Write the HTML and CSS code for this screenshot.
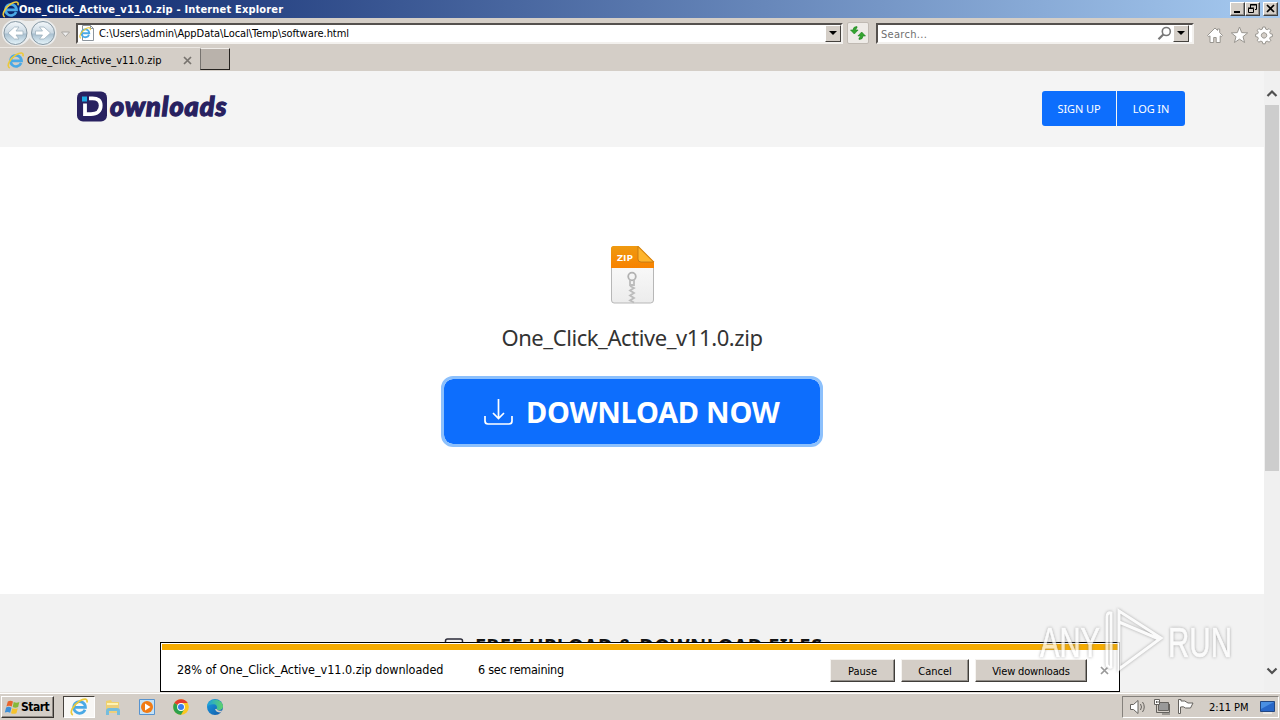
FILE: index.html
```html
<!DOCTYPE html>
<html lang="en">
<head>
<meta charset="utf-8">
<title>One_Click_Active_v11.0.zip</title>
<link rel="stylesheet" href="styles.css">
</head>
<body>
<svg width="0" height="0" class="defs">
  <defs>
    <linearGradient id="ball" x1="0" y1="0" x2="0" y2="1"><stop offset="0" stop-color="#f4f8fb"/><stop offset=".48" stop-color="#cbd9e3"/><stop offset=".55" stop-color="#a9c0d0"/><stop offset="1" stop-color="#e6f5fb"/></linearGradient>
    <linearGradient id="zipTop" x1="0" y1="0" x2="0" y2="1"><stop offset="0" stop-color="#ef9a10"/><stop offset="1" stop-color="#f88200"/></linearGradient>
    <linearGradient id="zipBody" x1="0" y1="0" x2="0" y2="1"><stop offset="0" stop-color="#fff"/><stop offset="1" stop-color="#ececec"/></linearGradient>
    <linearGradient id="edgeBlue" x1="0" y1="0" x2="1" y2="1"><stop offset="0" stop-color="#1b9de2"/><stop offset="1" stop-color="#1259a8"/></linearGradient>
    <linearGradient id="edgeTop" x1="0" y1="0" x2="1" y2="0"><stop offset="0" stop-color="#1b9fe0"/><stop offset="1" stop-color="#5fd36a"/></linearGradient>
    <symbol id="ie" viewBox="0 0 16 16">
      <path d="M13.300 10.400A5.200 5.200 0 1 1 13.700 8.300H4.600" fill="none" stroke="#4aa9e6" stroke-width="2.500"/>
      <path d="M2.600 15C-1 13.500 2.500 6.500 8.500 2.600 12.500.2 16 .2 15 4" fill="none" stroke="#ecc93a" stroke-width="1.500"/>
    </symbol>
    <symbol id="flag" viewBox="0 0 18 16">
      <path d="M4 1.500q3-1.500 5.500.2L8.200 7Q5.500 5.500 2.500 6.800z" fill="#e8642c"/>
      <path d="M10.300 2.200q3 1.500 6 0L15 7.500q-3 1.300-5.800 0z" fill="#86b83a"/>
      <path d="M2.200 7.900q3-1.300 5.700.3L6.500 13.500Q3.800 12 .8 13.300z" fill="#3d8fd8"/>
      <path d="M8.800 8.700q3 1.400 5.800 0L13.200 14q-3 1.500-5.800 0z" fill="#f5c22c"/>
    </symbol>
  </defs>
</svg>
<div class="screen">
  <header class="titlebar">
    <svg class="t-ico" width="17" height="17"><use href="#ie"/></svg>
    <span class="t-text">One_Click_Active_v11.0.zip - Internet Explorer</span>
    <div class="winbtns">
      <i class="wb"><svg width="14" height="12"><path d="M3 9h6" stroke="#000" stroke-width="2"/></svg></i>
      <i class="wb"><svg width="14" height="12"><path d="M4.500 5V1.500h6v5H9M4 2h7M2.500 5.500h5v4h-5zM2 5h6" fill="none" stroke="#000"/></svg></i>
      <i class="wb gap"><svg width="14" height="12"><path d="M3 2l7 7M10 2l-7 7" stroke="#000" stroke-width="1.700"/></svg></i>
    </div>
  </header>

  <nav class="navbar">
    <svg class="arrows" width="75" height="29" viewBox="0 0 75 29">
      <path d="M2 15C2 6 9 1.500 15.500 1.500q6 0 10 1.500h8c4-2 9-3 13-1 6 2 10 6 10 13 0 7-5 13-13 13-6 0-10-3-14-8-3 5-8 8-14 8C8 28 2 22 2 15z" fill="#ebecec"/>
      <circle cx="15.500" cy="15" r="11.500" fill="url(#ball)" stroke="#8698a4"/>
      <circle cx="43" cy="15" r="11.500" fill="url(#ball)" stroke="#8698a4"/>
      <path d="M23 13h-7l3-4h-4.500L8 15l6.500 6H19l-3-4h7zM35.500 13h7l-3-4H44l6.500 6-6.500 6h-4.500l3-4h-7z" fill="#fff" stroke="#9fb2bf" stroke-width=".8"/>
      <path d="M61.500 14h8l-4 4.500z" fill="#eee" stroke="#a9a6a1"/>
    </svg>
    <div class="address">
      <svg width="16" height="16" viewBox="0 0 16 16" class="page-ico"><path d="M3.500.5h8l3 3v12h-11z" fill="#fff" stroke="#8c949c"/><path d="M11.500.5v3h3" fill="none" stroke="#8c949c"/><svg x="0" y="2" width="12" height="12"><use href="#ie"/></svg></svg>
      <span class="url">C:\Users\admin\AppData\Local\Temp\software.html</span>
      <i class="drop"></i>
    </div>
    <div class="refresh"><svg width="20" height="20" viewBox="0 0 20 20"><path d="M9 3.500q-4 0-4 3.500H2.500L6.300 11l3.800-4H7.700Q7.500 5.300 9 5zM11 16.500q4 0 4-3.500h2.500l-3.800-4-3.800 4h2.400q.2 1.700-1.300 2z" fill="#34a52f" stroke="#1e8424" stroke-width=".6"/></svg></div>
    <div class="search"><span class="hint">Search...</span>
      <svg width="15" height="15" viewBox="0 0 15 15"><circle cx="9.300" cy="5.500" r="4" fill="none" stroke="#777" stroke-width="1.600"/><path d="M6.300 8.500L1.500 13.300" stroke="#777" stroke-width="2.200"/></svg>
      <i class="drop"></i>
    </div>
    <svg class="tools" width="70" height="22" viewBox="0 0 70 22">
      <g fill="#fff" stroke="#98958f" stroke-width="1" stroke-linejoin="round">
        <path d="M1.500 11.500L9 4l2.500 2.400V5h2.200v3.600l2.800 2.900-1.300 1.200-1-.9v6.700h-4v-5H7.700v5H4v-6.700l-1.100.9z"/>
        <path d="M33.500 3l2.200 5.600 6 .3-4.700 3.800 1.600 5.800-5.100-3.300-5.100 3.300 1.600-5.800-4.700-3.800 6-.3z"/>
        <path fill-rule="evenodd" d="M56.800 3h2.400l.5 2.100 1.500.6 1.900-1.100 1.700 1.700-1.100 1.900.6 1.500 2.100.5v2.400l-2.100.5-.6 1.500 1.100 1.900-1.700 1.700-1.900-1.100-1.500.6-.5 2.100h-2.400l-.5-2.100-1.500-.6-1.900 1.100-1.700-1.700 1.100-1.900-.6-1.500-2.100-.5v-2.400l2.100-.5.6-1.500-1.100-1.900 1.700-1.700 1.900 1.100 1.500-.6zM58 8.700a2.700 2.700 0 1 0 .1 0z"/>
      </g>
    </svg>
  </nav>

  <div class="tabs">
    <div class="tab"><svg width="17" height="17"><use href="#ie"/></svg><span class="tab-text">One_Click_Active_v11.0.zip</span><svg class="tab-x" width="9" height="9"><path d="M1 1l7 7M8 1L1 8" stroke="#77736e" stroke-width="1.700"/></svg></div>
    <div class="newtab"></div>
  </div>

  <div class="view">
    <main class="page">
      <div class="site-head">
        <div class="logo">
          <svg width="31" height="31" viewBox="0 0 31 31"><rect width="30" height="30" y=".5" rx="6" fill="#282160"/><path d="M8 12.500v10.700h6c6 0 9.700-3.200 9.700-8.700 0-5-3-7.200-8.200-7.200H12" fill="none" stroke="#fff" stroke-width="3.800"/><path d="M5 5.500h5v5H5z" fill="#1eaae2"/></svg>
          <span class="logo-text">ownloads</span>
        </div>
        <div class="auth"><a>SIGN UP</a><a>LOG IN</a></div>
      </div>
      <section class="hero">
        <svg class="zip" width="45" height="60" viewBox="0 0 45 60">
          <path d="M3 1.500h25L43.500 17v38q0 3-3 3H4q-2.500 0-2.500-3V4q0-2.500 2.500-2.500z" fill="url(#zipBody)" stroke="#b7b7b7"/>
          <path d="M3.500 1h25L44 16.500V23H1V3.500Q1 1 3.500 1z" fill="url(#zipTop)"/>
          <path d="M28 1.500V14q0 3 3 3h12.500z" fill="#ffb52c" stroke="#bc7414" stroke-width=".8"/>
          <text x="7" y="16" class="zip-label" textLength="16" lengthAdjust="spacingAndGlyphs">ZIP</text>
          <circle cx="22" cy="31.500" r="3.800" fill="none" stroke="#b2b2b2" stroke-width="1.800"/>
          <path d="M20 34.500v5.500h4v-5.500M20 41l4 2-4 2.500 4 2.500-4 2.500 4 2.500-4 2.500 4 2" fill="none" stroke="#bcbcbc" stroke-width="1.800"/>
        </svg>
        <h1 class="filename">One_Click_Active_v11.0.zip</h1>
        <a class="download">
          <svg width="30" height="26" viewBox="0 0 30 26"><path d="M1 17v5q0 3 3 3h21q3 0 3-3v-5M14.500 0v19M9 14l5.500 5.500L20 14" fill="none" stroke="#fff" stroke-width="1.700"/></svg>
          <span class="dl-text">DOWNLOAD NOW</span>
        </a>
      </section>
      <section class="feature">
        <svg width="20" height="20" viewBox="0 0 20 20"><rect x="1.500" y="1" width="17" height="17" rx="2" fill="none" stroke="#2a2a38" stroke-width="1.500"/></svg>
        <h2 class="feature-text">FREE UPLOAD &amp; DOWNLOAD FILES</h2>
      </section>
    </main>
    <div class="scroll">
      <svg width="16" height="34" viewBox="0 0 16 34"><path d="M3.500 25L8 20.500l4.500 4.500" fill="none" stroke="#505050" stroke-width="2.200"/></svg>
      <div class="thumb"></div>
      <svg class="down" width="16" height="34" viewBox="0 0 16 34"><path d="M3.500 10.500L8 15l4.500-4.500" fill="none" stroke="#505050" stroke-width="2.200"/></svg>
    </div>
    <div class="notice">
      <div class="bar"></div>
      <div class="row">
        <span class="msg">28% of One_Click_Active_v11.0.zip downloaded</span>
        <span class="remain">6 sec remaining</span>
        <button class="btn b1"><span>Pause</span></button><button class="btn b2"><span>Cancel</span></button><button class="btn b3"><span>View downloads</span></button>
        <svg width="9" height="9" class="nx"><path d="M1 1l7 7M8 1L1 8" stroke="#999" stroke-width="1.700"/></svg>
      </div>
    </div>
  </div>

  <footer class="taskbar">
    <div class="start"><svg width="17" height="15"><use href="#flag"/></svg><span class="start-text">Start</span></div>
    <div class="task active"><svg width="18" height="18"><use href="#ie"/></svg></div>
    <div class="task"><svg width="18" height="18" viewBox="0 0 18 18"><path d="M2 3l5-1 1 2h7v11H2z" fill="#efd16c"/><path d="M3 5h11v4H3z" fill="#fff3b3"/><path d="M3 7h12v8H3z" fill="#edcf7b"/><path d="M2 17v-4q0-3 3-3h8q3 0 3 3v4h-3v-4H5v4z" fill="#75bddd"/></svg></div>
    <div class="task"><svg width="18" height="18" viewBox="0 0 18 18"><path d="M1.500 1.500h15v15h-15z" fill="#c4e2f7" stroke="#5793cf"/><circle cx="9" cy="9" r="6" fill="#f17b14"/><path d="M7 5.500l5.500 3.500L7 12.500z" fill="#fff"/></svg></div>
    <div class="task"><svg width="18" height="18" viewBox="0 0 18 18"><circle cx="9" cy="9" r="7.800" fill="#fbc720"/><path d="M9 9L2.250 5.100A7.800 7.800 0 0 1 15.750 5.100H9z" fill="#e33b2e"/><path d="M9 9L2.250 5.100A7.800 7.800 0 0 0 9 16.800L12.400 11z" fill="#2da14c"/><circle cx="9" cy="9" r="3.900" fill="#fff"/><circle cx="9" cy="9" r="3" fill="#3b7ded"/></svg></div>
    <div class="task"><svg width="18" height="18" viewBox="0 0 18 18"><circle cx="9" cy="9" r="8" fill="url(#edgeBlue)"/><path d="M1.200 8.500C1.700-1.300 17 0 17 8.500c0 4-6 4.400-6.500 2.500 1.300-2 0-4.500-2.500-4.700-3-.2-6 1-6.800 2.200z" fill="url(#edgeTop)"/><path d="M10.500 11q1 2.500 6 1.500-1 1.500-2 2-4.500 0-5.500-3.500z" fill="#d5cec6"/></svg></div>
    <div class="tray">
      <svg width="72" height="18" viewBox="0 0 72 18"><g fill="#fff" stroke="#65625e">
        <path d="M1.500 6.500h3L9 2.500v13l-4.500-4h-3z"/><path d="M11.500 6q2 3 0 6M13.500 4q3.500 5 0 10" fill="none"/>
        <path d="M29.500 4.500h10v8h-10z" fill="#999"/><path d="M25.500 1.500h5v5h-5z"/><path d="M27.500 6.500v8h13V6" fill="none"/><path d="M27.500 3v2M29 3v2M33 16h8"/>
        <path d="M49.500 1.500v14h2V9q3-1 5 1h5l2.500-5h-5q-3-3-7-2V1.500z"/></g></svg>
      <span class="clock">2:11 PM</span>
      <svg width="17" height="15" viewBox="0 0 17 15"><path d="M1.500 1.500h14v10h-14z" fill="#2867c8" stroke="#234781"/><path d="M2 2h13L2 9z" fill="#4a8fe2"/><path d="M4 13h9" stroke="#fff"/></svg>
    </div>
  </footer>
  <svg class="watermark" width="220" height="70" viewBox="0 0 220 70">
    <g class="wm-shape"><path d="M76 6q-4-1-4 4v46q0 5 4 4zM84 4l42 27-42 31zM84 15l40 17"/></g>
    <text class="wm-text" x="5" y="50" textLength="60" lengthAdjust="spacingAndGlyphs">ANY</text>
    <text class="wm-text" x="133" y="50" textLength="64" lengthAdjust="spacingAndGlyphs">RUN</text>
  </svg>
</div>
</body>
</html>
```

FILE: styles.css
```css
* { box-sizing: border-box; }
body { margin: 0; font-family: "DejaVu Sans Condensed", "DejaVu Sans", sans-serif; font-stretch: condensed; font-size: 11px; color: #000; }
.defs { position: absolute; }
.screen { position: relative; width: 1280px; height: 720px; overflow: hidden; display: flex; flex-direction: column; background: #d4cec7; }
svg { flex: none; display: block; }
span, h1, h2, a { white-space: nowrap; }

.titlebar { height: 18px; display: flex; align-items: center; background: linear-gradient(90deg, #0a246a, #a6caf0); padding: 0 2px; flex: none; }
.t-text { color: #fff; font-weight: bold; letter-spacing: .18px; }
.winbtns { margin-left: auto; display: flex; }
.wb { width: 15px; height: 14px; background: #d4cec7; border: 1px solid; border-color: #fff #404040 #404040 #fff; box-shadow: inset -1px -1px #918e8a; }
.gap { margin-left: 3px; }

.navbar { height: 29px; display: flex; align-items: center; flex: none; }
.address { width: 767px; height: 21px; margin: 1px 0 0 1px; background: #fff; border: 2px solid; border-color: #55514e #f3f1ee #f3f1ee #55514e; display: flex; align-items: center; }
.page-ico { margin-left: 1px; }
.url { margin: 1px 0 0 4px; letter-spacing: -.04px; }
.drop { margin-left: auto; width: 16px; height: 17px; background: #d4cec7; border: 1px solid; border-color: #fff #45423e #45423e #fff; display: flex; align-items: center; justify-content: center; }
.drop::after { content: ""; border: 4px solid transparent; border-top-color: #000; border-bottom: 0; }
.refresh { width: 22px; height: 22px; margin: 1px 0 0 4px; background: #eeebe7; border: 1px solid #c0bab3; border-radius: 2px; }
.search { width: 318px; height: 21px; margin: 1px 0 0 7px; background: #fff; border: 2px solid; border-color: #55514e #f3f1ee #f3f1ee #55514e; display: flex; align-items: center; padding-right: 3px; }
.hint { color: #6f6f6f; margin: 2px 0 0 3px; flex: 1; letter-spacing: .3px; }
.search .drop { margin-left: 1px; }
.tools { margin: 4px 0 0 12px; }

.tabs { height: 24px; display: flex; flex: none; }
.tab { width: 200px; height: 23px; display: flex; align-items: center; padding: 2px 8px 0 7px; border-top: 1px solid #ece8e3; }
.tab-text { margin-left: 3px; }
.tab-x { margin-left: auto; }
.newtab { width: 30px; height: 22px; margin-top: 1px; background: #b9b2ab; border: 1px solid; border-color: #f0ede9 #25221f #25221f #77736f; }

.view { position: relative; height: 621px; display: flex; flex: none; background: #f2f2f2; }
.page { width: 1264px; height: 621px; overflow: hidden; background: #fff; }
.site-head { height: 76px; background: #f4f4f4; display: flex; justify-content: space-between; align-items: flex-start; padding: 20px 79px 0 77px; }
.logo { display: flex; align-items: center; height: 31px; }
.logo-text { font: italic 900 27px/30px Lato, sans-serif; color: #282160; margin: -2px 0 0 2px; letter-spacing: 1px; -webkit-text-stroke: 1.300px #282160; }
.auth { display: flex; gap: 1px; }
.auth a { height: 35px; background: #0d6efd; color: #fff; font: 11px/36px "Noto Sans", sans-serif; width: 74px; text-align: center; border-radius: 3px 0 0 3px; letter-spacing: -.1px; }
.auth a + a { width: 68px; border-radius: 0 3px 3px 0; }
.hero { height: 447px; display: flex; flex-direction: column; align-items: center; padding-top: 98px; }
.zip-label { font: bold 9.500px "Open Sans", sans-serif; fill: #fff; }
.filename { margin: 15px 0 0; font: 22px/34px "Noto Sans", sans-serif; letter-spacing: -.42px; color: #333; }
.download { width: 382px; height: 71px; margin-top: 22px; border: 3px solid #8cc0fc; border-radius: 12px; background: #0d6efd; background-clip: padding-box; display: flex; align-items: center; padding-left: 40px; color: #fff; }
.dl-text { font: bold 29px/40px "Noto Sans", sans-serif; margin-left: 12px; letter-spacing: -.25px; }
.feature { height: 98px; background: #f2f2f2; display: flex; padding: 44px 0 0 444px; }
.feature-text { margin: -8px 0 0 11px; font: bold 20px/32px "Noto Sans", sans-serif; letter-spacing: .36px; color: #111; }

.scroll { width: 16px; background: #f0f0f0; display: flex; flex-direction: column; }
.thumb { height: 366px; background: #cdcdcd; margin: 0 1px; flex: none; }
.down { margin-top: auto; }

.notice { position: absolute; left: 160px; top: 571px; width: 960px; height: 50px; background: #fff; border: 1px solid #000; padding: 1px; }
.bar { height: 6px; background: #f5ab00; }
.row { display: flex; align-items: center; height: 41px; padding-left: 15px; }
.msg { font-size: 12.500px; width: 301px; margin-top: -2px; letter-spacing: -.03px; }
.remain { font-size: 12.500px; width: 352px; margin-top: -2px; letter-spacing: -.28px; }
.btn { height: 23px; padding: 1px 0 0; margin: 0 6px 0 0; background: #d4cec7; border: 1px solid; border-color: #f5f3f0 #403d39 #403d39 #f5f3f0; box-shadow: inset -1px -1px #918d88; font: inherit; flex: none; }
.b1 { width: 65px; }
.b2 { width: 68px; }
.b3 { width: 112px; letter-spacing: -.15px; }
.nx { margin-left: 7px; }

.taskbar { height: 28px; display: flex; align-items: center; border-top: 1px solid #e5e1dc; box-shadow: inset 0 1px #fff; padding: 1px 0 0 1px; flex: none; }
.start { width: 53px; height: 22px; border: 1px solid; border-color: #fff #37332f #37332f #fff; box-shadow: inset -1px -1px #8e8984; display: flex; align-items: center; padding-left: 2px; margin-right: 9px; }
.start-text { font-weight: bold; font-size: 12px; letter-spacing: -.5px; }
.task { width: 32px; height: 22px; margin-right: 2px; display: flex; align-items: center; justify-content: center; }
.active { background: #f8f7f5; border: 1px solid; border-color: #45413c #fff #fff #45413c; }
.tray { margin-left: auto; width: 157px; height: 22px; margin-right: 1px; border: 1px solid; border-color: #85817c #fff #fff #85817c; display: flex; align-items: center; padding-left: 6px; }
.clock { width: 44px; margin: 0 6px 0 8px; letter-spacing: -.05px; }

.watermark { position: absolute; left: 1035px; top: 607px; opacity: .72; filter: drop-shadow(0 0 1.500px #888); overflow: visible; }
.wm-shape path { fill: none; stroke: #fff; stroke-width: 3; }
.wm-text { font: 43px "Liberation Sans Narrow", "Liberation Sans", sans-serif; fill: #fff; stroke: #fff; stroke-width: .7; }
```
